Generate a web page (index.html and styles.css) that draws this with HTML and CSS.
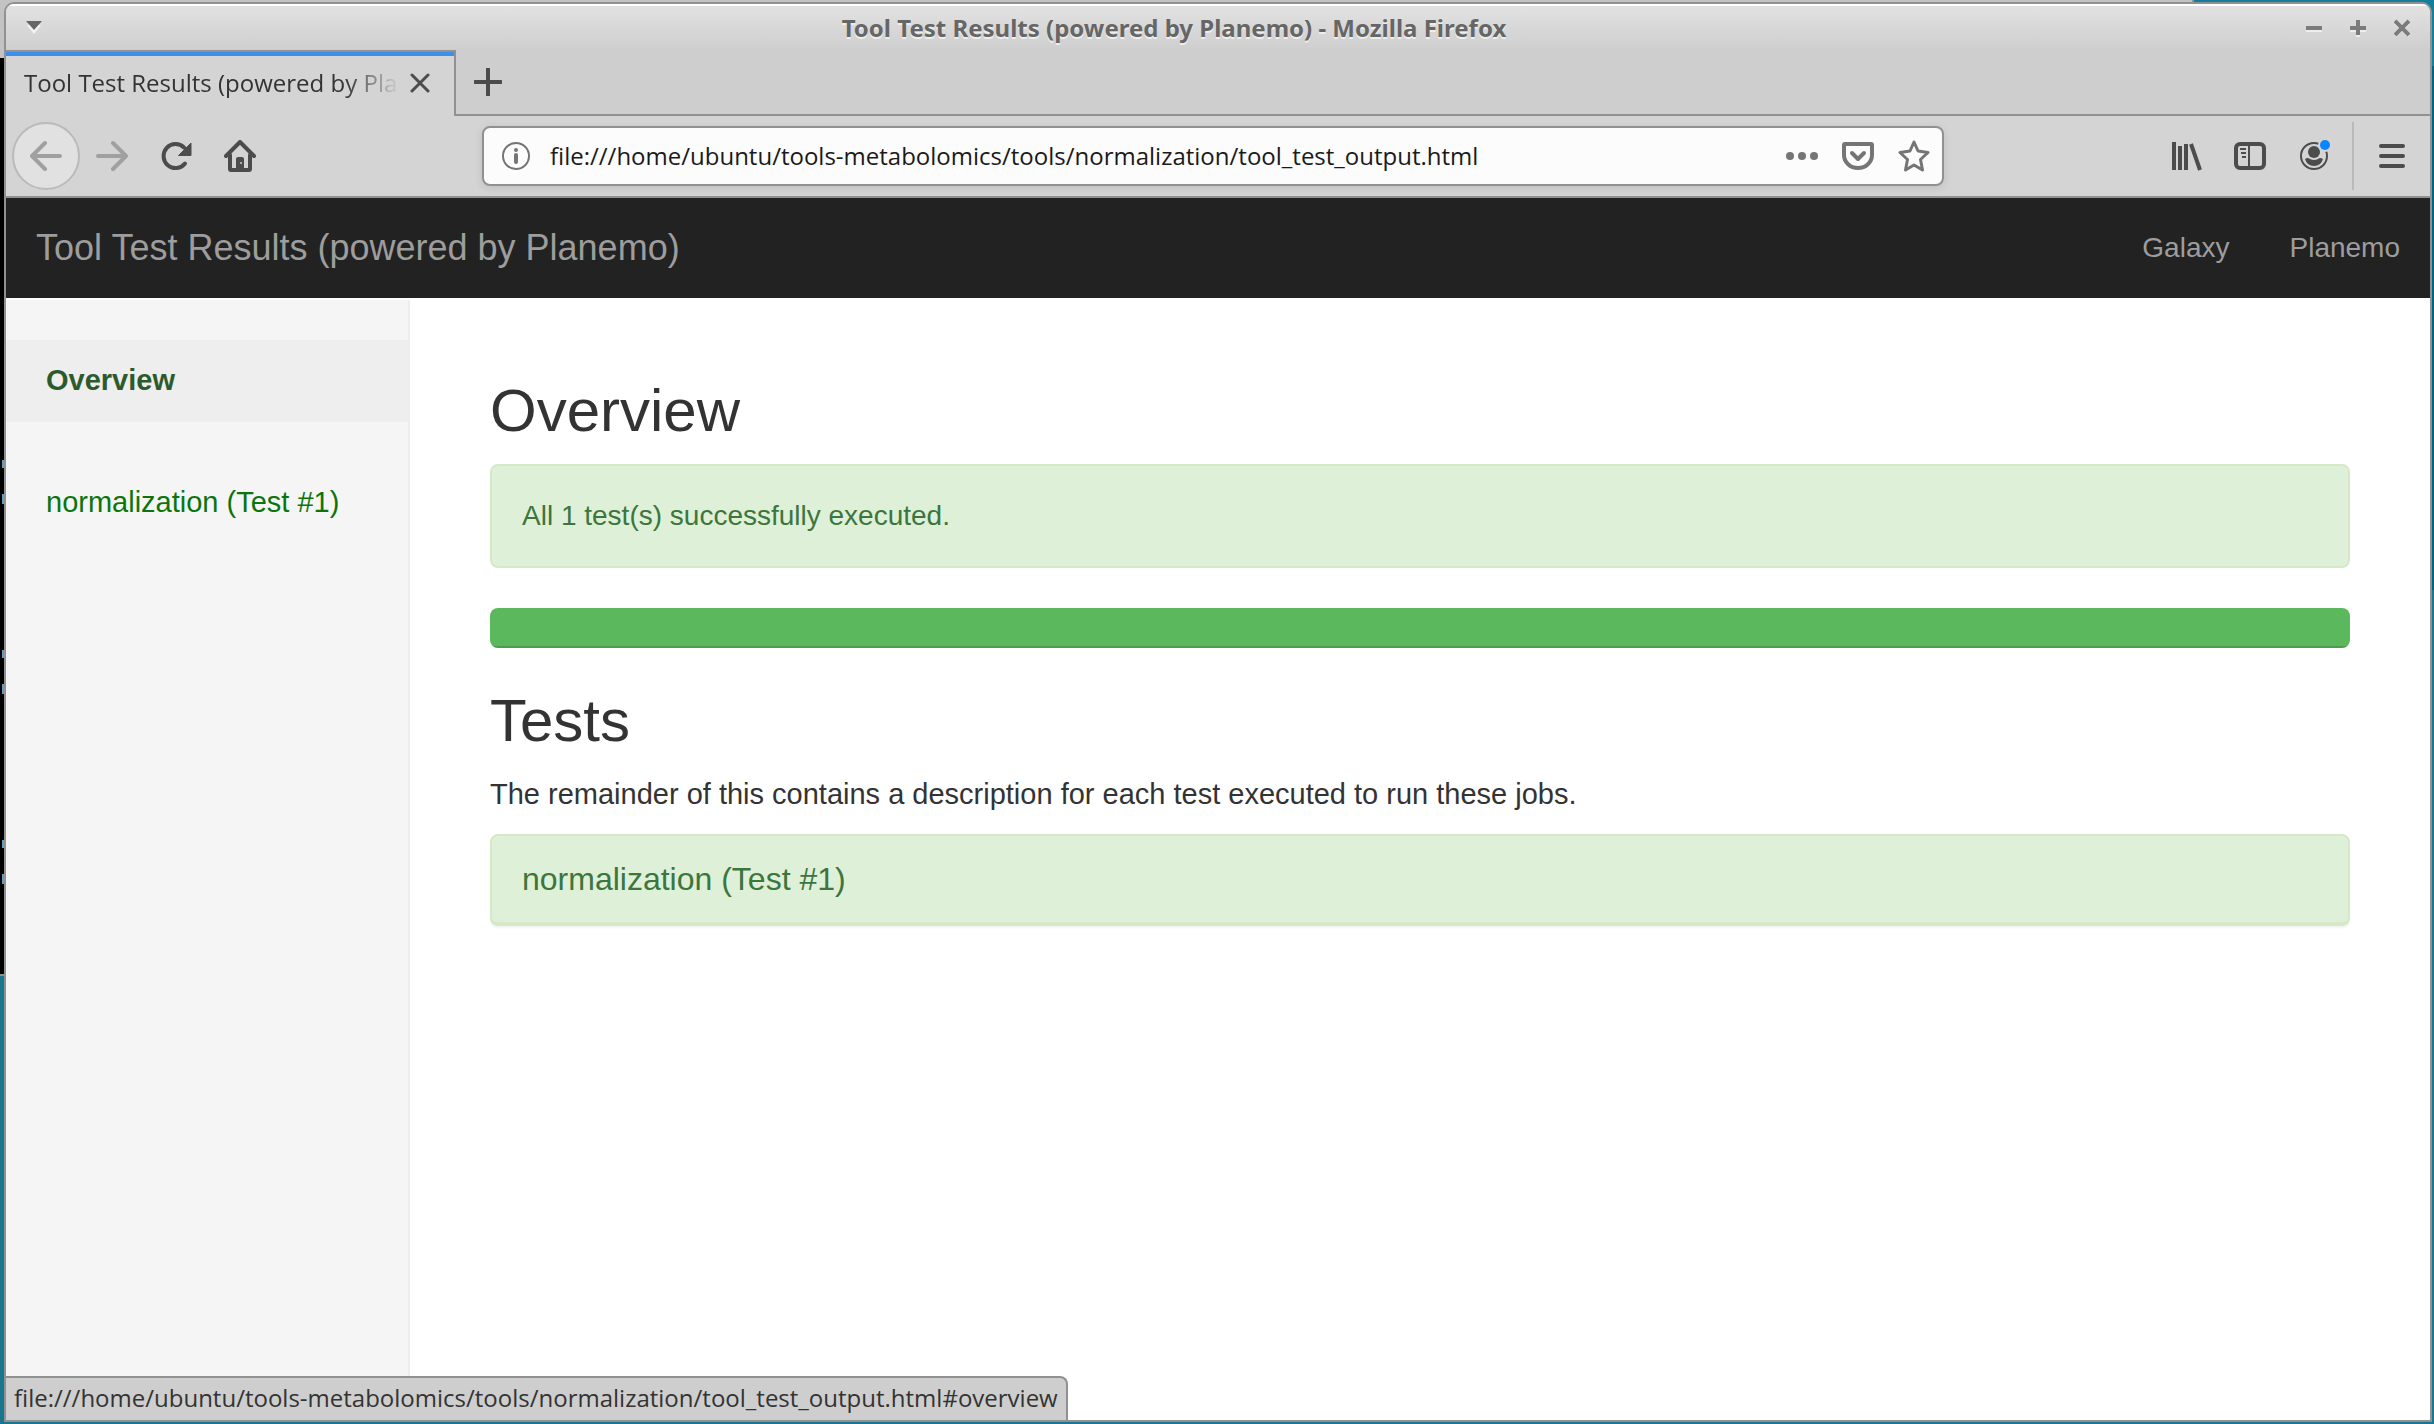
FILE: index.html
```html
<!DOCTYPE html>
<html lang="en">
<head>
<meta charset="utf-8">
<title>Tool Test Results (powered by Planemo)</title>
<link rel="stylesheet" href="styles.css">
</head>
<body class="desktop">
<div class="back-window" aria-hidden="true"></div>
<div class="terminal" aria-hidden="true"></div>
<div class="window">
  <header class="titlebar">
    <button class="wm-button" aria-label="Window menu"><svg width="16" height="14" viewBox="0 0 16 14"><path d="M1 4h14l-7 9z" fill="#f4f4f4"/><path d="M0 0h16L8 9z" fill="#666"/></svg></button>
    <span class="window-title">Tool Test Results (powered by Planemo) - Mozilla Firefox</span>
    <div class="wm-buttons">
      <button class="wm-button" aria-label="Minimize"><svg width="16" height="16" viewBox="0 0 16 16"><path d="M0 11h16" stroke="#eee" stroke-width="2"/><path d="M0 8h16" stroke="#7b7b7b" stroke-width="4"/></svg></button>
      <button class="wm-button" aria-label="Maximize"><svg width="16" height="18" viewBox="0 0 16 18"><path d="M0 12h16M6 17h4" stroke="#eee" stroke-width="2"/><path d="M0 9h16M8 1v15" stroke="#7b7b7b" stroke-width="4"/></svg></button>
      <button class="wm-button" aria-label="Close window"><svg width="16" height="18" viewBox="0 0 16 18"><path d="M1 4l14 13M15 4L1 17" stroke="#eee" stroke-width="3"/><path d="M1 2l14 14M15 2L1 16" stroke="#7b7b7b" stroke-width="4"/></svg></button>
    </div>
  </header>

  <div class="tabstrip">
    <div class="tab">
      <span class="tab-label">Tool Test Results (powered by Planemo)</span>
      <button class="icon-button" aria-label="Close tab"><svg width="20" height="20" viewBox="0 0 20 20"><path d="M2 2l16 16M18 2L2 18" stroke="#4c4c4c" stroke-width="3" stroke-linecap="round"/></svg></button>
    </div>
    <div class="tab-rest">
      <button class="icon-button" aria-label="New tab"><svg width="28" height="28" viewBox="0 0 28 28"><path d="M1 14h26M14 1v26" stroke="#4c4c4c" stroke-width="4" stroke-linecap="round"/></svg></button>
    </div>
  </div>

  <div class="toolbar">
    <button class="back-button" aria-label="Back"><svg width="32" height="32" viewBox="0 0 32 32"><path d="M30 16H3M15 3L2 16l13 13" class="line"/></svg></button>
    <div class="nav-buttons">
      <button class="icon-button faded" aria-label="Forward"><svg width="32" height="32" viewBox="0 0 32 32"><path d="M2 16h27M17 3l13 13-13 13" class="line"/></svg></button>
      <button class="icon-button" aria-label="Reload"><svg width="32" height="32" viewBox="0 0 32 32"><path d="M25 23.500A12 12 0 1 1 24 7.500" class="line"/><path d="M31 3v12.500H18.500z" fill="#4c4c4c" stroke="#4c4c4c" stroke-linejoin="round"/></svg></button>
      <button class="icon-button" aria-label="Home"><svg width="32" height="32" viewBox="0 0 32 32"><path d="M2 16L16 2l14 14M6 15v14q0 1 1 1h18q1 0 1-1V15" class="line"/><path d="M12 30V19q0-2 2-2h4q2 0 2 2v11z" fill="#4c4c4c"/><circle cx="17" cy="23" r="1" fill="#ccc"/></svg></button>
    </div>
    <div class="urlbar">
      <svg width="28" height="28" viewBox="0 0 28 28"><circle cx="14" cy="14" r="13" fill="none" stroke="#757575" stroke-width="2"/><path d="M14 13v7" stroke="#757575" stroke-width="4" stroke-linecap="round"/><circle cx="14" cy="8" r="2" fill="#757575"/></svg>
      <input class="url" type="text" aria-label="Address" value="file:///home/ubuntu/tools-metabolomics/tools/normalization/tool_test_output.html">
      <button class="icon-button" aria-label="Page actions"><svg width="32" height="32" viewBox="0 0 32 32" fill="#757575"><circle cx="4" cy="16" r="4"/><circle cx="16" cy="16" r="4"/><circle cx="28" cy="16" r="4"/></svg></button>
      <button class="icon-button" aria-label="Save to Pocket"><svg width="32" height="32" viewBox="0 0 32 32" fill="none" stroke="#757575" stroke-width="4" stroke-linejoin="round" stroke-linecap="round"><path d="M3 4h26q1 0 1 1v10a14 13 0 0 1-28 0V5q0-1 1-1zM10 13l6 6 6-6"/></svg></button>
      <button class="icon-button" aria-label="Bookmark this page"><svg width="32" height="32" viewBox="0 0 32 32" fill="none" stroke="#757575" stroke-width="3" stroke-linejoin="round"><path d="M16 2l4 9 10 1.500-7.500 7L24.500 30 16 25l-8.500 5 2-10.500L2 12.500 12 11z"/></svg></button>
    </div>
    <div class="tool-buttons">
      <button class="icon-button" aria-label="Library"><svg width="32" height="32" viewBox="0 0 32 32"><path d="M4 2v28M10 6v24M16 4v26M21 4l9 26" fill="none" stroke="#4c4c4c" stroke-width="4"/></svg></button>
      <button class="icon-button" aria-label="Sidebars"><svg width="32" height="32" viewBox="0 0 32 32"><rect x="2" y="4" width="28" height="24" rx="4" fill="none" stroke="#4c4c4c" stroke-width="4"/><path d="M15 4v24M6 9h6M7 13h5M8 17h4" stroke="#4c4c4c" stroke-width="2"/></svg></button>
      <button class="icon-button" aria-label="Account"><svg width="32" height="32" viewBox="0 0 32 32"><circle cx="16" cy="16" r="13" fill="none" stroke="#4c4c4c" stroke-width="2"/><circle cx="16" cy="12" r="6" fill="#4c4c4c"/><path d="M7 19q3-2 5 0 4 2 8 0 2-2 5 0-2 7-9 7t-9-7z" fill="#4c4c4c"/><circle cx="27" cy="5" r="7" fill="#d4d4d4"/><circle cx="27" cy="5" r="5" fill="#0a84ff"/></svg></button>
    </div>
    <div class="menu-box">
      <button class="icon-button" aria-label="Menu"><svg width="32" height="32" viewBox="0 0 32 32"><path d="M5 6h22M5 16h22M5 26h22" stroke="#4c4c4c" stroke-width="4" stroke-linecap="round"/></svg></button>
    </div>
  </div>

  <div class="page">
    <nav class="navbar">
      <a class="brand" href="#">Tool Test Results (powered by Planemo)</a>
      <a class="nav-link" href="#galaxy">Galaxy</a>
      <a class="nav-link" href="#planemo">Planemo</a>
    </nav>
    <div class="columns">
      <aside class="sidebar">
        <a class="side-link active" href="#overview">Overview</a>
        <a class="side-link" href="#test1">normalization (Test #1)</a>
      </aside>
      <main class="main">
        <h2 id="overview">Overview</h2>
        <div class="alert">All 1 test(s) successfully executed.</div>
        <div class="progress"><div class="progress-bar"></div></div>
        <h2>Tests</h2>
        <p class="lead">The remainder of this contains a description for each test executed to run these jobs.</p>
        <section class="panel" id="test1"><h3 class="panel-title">normalization (Test #1)</h3></section>
      </main>
    </div>
    <div class="status">file:///home/ubuntu/tools-metabolomics/tools/normalization/tool_test_output.html#overview</div>
  </div>
</div>
</body>
</html>
```
FILE: styles.css
```css
* { box-sizing: border-box; }

.desktop {
  margin: 0;
  min-height: 100vh;
  padding: 2px 2px 2px 4px;
  display: flex;
  position: relative;
  background: linear-gradient(#147f9b 66px, #00637f 66px, #00637f 590px, #1a758f 590px);
  font-family: "Liberation Sans", Arial, sans-serif;
  font-size: 28px;
  line-height: 40px;
  color: #333;
}

/* windows that lie behind the browser */
.back-window {
  position: absolute;
  top: 0;
  left: 0;
  right: 240px;
  height: 58px;
  background: #c3c3c3;
  border-right: 2px solid #919191;
}
.terminal {
  position: absolute;
  top: 58px;
  left: 0;
  width: 40px;
  height: 918px;
  background: #000;
  border-bottom: 2px solid #919191;
}
/* edges of the prompt lines in the terminal */
.terminal::before {
  content: "";
  position: absolute;
  top: 402px;
  left: 2px;
  width: 2px;
  height: 430px;
  background: linear-gradient(#5aa3c4 8px, #000 8px, #000 34px, #5aa3c4 34px, #5aa3c4 44px, #000 44px) 0 0 / 2px 190px;
}

.window {
  position: relative;
  flex: 1;
  min-width: 0;
  display: flex;
  flex-direction: column;
  border: 2px solid #919191;
  border-radius: 10px 10px 0 0;
  overflow: hidden;
  background: #cecece;
}

button {
  border: 0;
  padding: 0;
  background: none;
  display: flex;
}
svg { display: block; flex: none; }
.line {
  fill: none;
  stroke: #4c4c4c;
  stroke-width: 4;
  stroke-linecap: round;
  stroke-linejoin: round;
}

.titlebar {
  height: 46px;
  padding: 0 20px;
  display: flex;
  align-items: center;
  justify-content: space-between;
  border-top: 2px solid #fff;
  background: linear-gradient(#e2e2e2, #cecece);
}
.window-title {
  font: bold 24px/36px "Noto Sans", sans-serif;
  color: #666;
  text-shadow: 0 2px 0 #eee;
}
.wm-buttons { display: flex; align-items: center; gap: 28px; }

.tabstrip { display: flex; height: 66px; }
.tab {
  width: 450px;
  display: flex;
  align-items: center;
  justify-content: space-between;
  padding: 0 24px 2px 18px;
  border-top: 2px solid #919191;
  border-right: 2px solid #919191;
  background: linear-gradient(#3b8eea 4px, #d4d4d4 4px);
}
.tab-label {
  width: 372px;
  overflow: hidden;
  white-space: nowrap;
  font: 24px/36px "Open Sans", sans-serif;
  color: #333;
  -webkit-mask-image: linear-gradient(to right, #000 320px, transparent 376px);
  mask-image: linear-gradient(to right, #000 320px, transparent 376px);
}
.tab-rest {
  flex: 1;
  display: flex;
  align-items: center;
  padding-left: 18px;
  border-bottom: 2px solid #919191;
}

.toolbar {
  height: 82px;
  display: flex;
  align-items: center;
  padding-left: 6px;
  background: #d4d4d4;
  border-bottom: 2px solid #919191;
}
.back-button {
  width: 68px;
  height: 68px;
  align-items: center;
  justify-content: center;
  border: 2px solid #bababa;
  border-radius: 50%;
  background: #e1e1e1;
}
.back-button .line, .faded .line { stroke: #a0a0a0; }
.nav-buttons { display: flex; gap: 32px; margin-left: 16px; }
.urlbar {
  flex: 1;
  height: 60px;
  margin: 0 226px;
  display: flex;
  align-items: center;
  gap: 24px;
  padding: 0 12px 0 18px;
  border: 2px solid #919191;
  border-radius: 8px;
  background: #fcfcfc;
  box-shadow: 0 2px 8px rgba(0, 0, 0, .1);
}
.url {
  flex: 1;
  min-width: 0;
  margin-left: -4px;
  border: 0;
  padding: 0;
  background: none;
  font: 24px/36px "Open Sans", sans-serif;
  color: #1a1a1a;
}
.tool-buttons { display: flex; gap: 32px; }
.menu-box {
  height: 68px;
  display: flex;
  align-items: center;
  margin-left: 22px;
  padding: 0 22px;
  border-left: 2px solid #bababa;
}

.page {
  position: relative;
  flex: 1;
  display: flex;
  flex-direction: column;
  background: #fff;
}
.navbar {
  height: 100px;
  display: flex;
  align-items: center;
  gap: 60px;
  padding: 0 30px;
  background: #222;
}
.navbar a { color: #9d9d9d; text-decoration: none; }
.navbar .brand { flex: 1; font-size: 36px; }

.columns { flex: 1; display: flex; padding-top: 2px; }
.sidebar {
  width: 404px;
  padding-top: 40px;
  display: flex;
  flex-direction: column;
  gap: 40px;
  background: #f5f5f5;
  border-right: 2px solid #eee;
  font-size: 29px;
}
.side-link {
  padding: 20px 40px 22px;
  color: #0b750b;
  text-decoration: none;
}
.side-link.active { background: #eee; color: #2d5a2d; font-weight: bold; }

.main { flex: 1; padding: 78px 80px; }
h2 {
  margin: 0 0 20px;
  font-size: 60px;
  line-height: 66px;
  font-weight: normal;
}
.alert {
  padding: 30px;
  border: 2px solid #d6e9c6;
  border-radius: 8px;
  background: #dff0d8;
  color: #3c763d;
}
.progress {
  height: 40px;
  margin: 40px 0;
  border-radius: 8px;
  overflow: hidden;
  background: #f5f5f5;
}
.progress-bar {
  height: 100%;
  background: #5cb85c;
  box-shadow: inset 0 -2px 0 rgba(0, 0, 0, .15);
}
.lead { margin: 0 0 20px; font-size: 29px; }
.panel {
  border: 2px solid #d6e9c6;
  border-bottom-width: 4px;
  border-radius: 8px;
  background: #dff0d8;
  box-shadow: 0 2px 2px rgba(0, 0, 0, .05);
}
.panel-title {
  margin: 0;
  padding: 24px 30px;
  font-size: 32px;
  line-height: 38px;
  font-weight: normal;
  color: #3c763d;
}

/* link target shown over the page while a link is hovered */
.status {
  position: absolute;
  left: 0;
  bottom: 0;
  padding: 2px 8px 4px;
  border: 2px solid #919191;
  border-width: 2px 2px 0 0;
  border-radius: 0 8px 0 0;
  background: #cecece;
  font: 24px/36px "Open Sans", sans-serif;
  color: #333;
}
```
